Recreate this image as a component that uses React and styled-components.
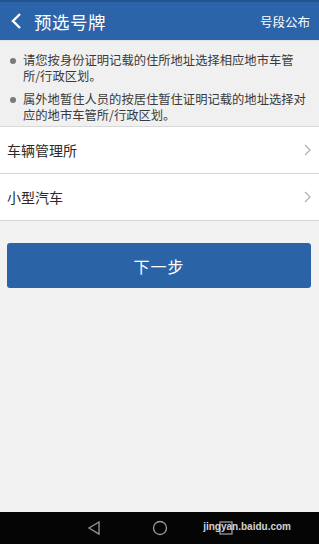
import React from 'react';
import styled, { createGlobalStyle } from 'styled-components';

const GlobalStyle = createGlobalStyle`
  html, body {
    margin: 0;
    padding: 0;
    background: #f2f2f2;
  }
  body {
    font-family: "Noto Sans CJK SC", "Noto Sans", sans-serif;
  }
`;

const Screen = styled.div`
  display: flex;
  flex-direction: column;
  width: 319px;
  height: 544px;
  background: #f2f2f2;
  overflow: hidden;
`;

const Header = styled.div`
  display: flex;
  align-items: center;
  height: 40px;
  padding: 0 9px 0 10px;
  background: #2c64aa;
  border-top: 2px solid #24548f;
  box-sizing: border-box;
  color: #fff;
`;

const Back = styled.svg`
  width: 14px;
  height: 18px;
  margin-right: 10px;
`;

const Title = styled.div`
  flex: 1;
  font-size: 17.5px;
  letter-spacing: 0.5px;
`;

const HeaderLink = styled.div`
  font-size: 12.5px;
`;

const Notes = styled.div`
  display: flex;
  flex-direction: column;
  gap: 8px;
  height: 87px;
  padding: 12px 10px 0 10px;
  box-sizing: border-box;
  background: #f0f0f0;
  border-top: 1px solid #dfe3ea;
  border-bottom: 1px solid #d8d8d8;
`;

const Note = styled.div`
  display: flex;
  gap: 7px;
  font-size: 12.3px;
  line-height: 15.5px;
  color: #3a3a3a;
`;

const Bullet = styled.span`
  flex: none;
  width: 6px;
  height: 6px;
  margin-top: 5px;
  border-radius: 50%;
  background: #7a7a7a;
`;

const List = styled.div`
  display: flex;
  flex-direction: column;
  background: #fff;
`;

const Row = styled.div`
  display: flex;
  align-items: center;
  justify-content: space-between;
  height: 47px;
  padding: 0 8px 0 7px;
  box-sizing: border-box;
  border-bottom: 1px solid #d6d6d6;
  font-size: 14px;
  color: #2a2a2a;
`;

const Chevron = styled.svg`
  width: 7px;
  height: 12px;
`;

const Action = styled.div`
  padding: 22px 8px 0 7px;
`;

const NextButton = styled.button`
  width: 100%;
  height: 45px;
  border: none;
  border-radius: 3px;
  background: #2b63a7;
  color: #fff;
  font-family: "Noto Sans CJK SC", sans-serif;
  font-size: 16px;
  letter-spacing: 1px;
`;

const Filler = styled.div`
  flex: 1;
  position: relative;
`;

const Watermark = styled.div`
  position: absolute;
  right: 28px;
  bottom: -20px;
  font-family: "Liberation Sans", sans-serif;
  font-size: 10px;
  font-weight: bold;
  color: rgba(235, 235, 235, 0.9);
  z-index: 2;
`;

const NavBar = styled.div`
  display: flex;
  align-items: center;
  justify-content: center;
  gap: 50px;
  height: 32px;
  background: #050505;
`;

const NavIcon = styled.svg`
  width: 16px;
  height: 16px;
`;

export default function App() {
  return (
    <Screen>
      <GlobalStyle />
      <Header>
        <Back viewBox="0 0 14 18">
          <path d="M10 2 L3 9 L10 16" fill="none" stroke="#fff" strokeWidth="2.4" />
        </Back>
        <Title>预选号牌</Title>
        <HeaderLink>号段公布</HeaderLink>
      </Header>
      <Notes>
        <Note>
          <Bullet />
          <span>请您按身份证明记载的住所地址选择相应地市车管所/行政区划。</span>
        </Note>
        <Note>
          <Bullet />
          <span>属外地暂住人员的按居住暂住证明记载的地址选择对应的地市车管所/行政区划。</span>
        </Note>
      </Notes>
      <List>
        {['车辆管理所', '小型汽车'].map((label) => (
          <Row key={label}>
            <span>{label}</span>
            <Chevron viewBox="0 0 7 12">
              <path d="M1 1 L6 6 L1 11" fill="none" stroke="#b0b0b0" strokeWidth="1.2" />
            </Chevron>
          </Row>
        ))}
      </List>
      <Action>
        <NextButton>下一步</NextButton>
      </Action>
      <Filler>
        <Watermark>jingyan.baidu.com</Watermark>
      </Filler>
      <NavBar>
        <NavIcon viewBox="0 0 16 16">
          <path d="M13 2 L3 8 L13 14 Z" fill="none" stroke="#9a9a9a" strokeWidth="1.3" />
        </NavIcon>
        <NavIcon viewBox="0 0 16 16">
          <circle cx="8" cy="8" r="6.5" fill="none" stroke="#9a9a9a" strokeWidth="1.3" />
        </NavIcon>
        <NavIcon viewBox="0 0 16 16">
          <rect x="2" y="2" width="12" height="12" fill="none" stroke="#9a9a9a" strokeWidth="1.3" />
        </NavIcon>
      </NavBar>
    </Screen>
  );
}
